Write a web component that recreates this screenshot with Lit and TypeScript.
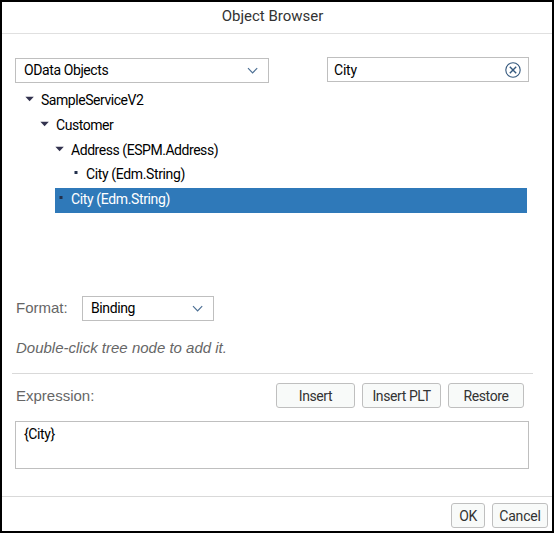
import { LitElement, html, css, svg } from "lit";
import { customElement, property } from "lit/decorators.js";

interface TreeNode {
  label: string;
  level: number;
  leaf?: boolean;
  selected?: boolean;
}

const NODES: TreeNode[] = [
  { label: "SampleServiceV2", level: 0 },
  { label: "Customer", level: 1 },
  { label: "Address (ESPM.Address)", level: 2 },
  { label: "City (Edm.String)", level: 3, leaf: true },
  { label: "City (Edm.String)", level: 2, leaf: true, selected: true },
];

const chevron = svg`<path d="M1 1.2 L5.6 5.8 L10.2 1.2" fill="none" stroke="#4c6f94" stroke-width="1.2"/>`;

@customElement("ob-select")
class ObSelect extends LitElement {
  @property() value = "";
  static styles = css`
    :host {
      display: flex;
      box-sizing: border-box;
      height: 25px;
      align-items: center;
      justify-content: space-between;
      border: 1px solid #bfbfbf;
      padding: 0 10px 1px 8px;
      background: #fff;
    }
    svg { display: block; width: 11px; height: 7px; }
  `;
  render() {
    return html`<span>${this.value}</span><svg viewBox="0 0 11 7">${chevron}</svg>`;
  }
}

@customElement("app-root")
class AppRoot extends LitElement {
  static styles = css`
    :host {
      display: flex;
      flex-direction: column;
      box-sizing: border-box;
      width: 554px;
      height: 533px;
      border: 2px solid #000;
      background: #fff;
      color: #000;
      font: 14px/16px Roboto, "Liberation Sans", sans-serif;
      letter-spacing: -0.4px;
      overflow: hidden;
      white-space: nowrap;
    }
    header {
      box-sizing: border-box;
      height: 32px;
      border-bottom: 1px solid #e0e0e0;
      text-align: center;
      font-size: 15px;
      letter-spacing: 0;
      line-height: 28px;
      color: #333;
      padding-right: 9px;
    }
    main { flex: 1; padding: 23px 23px 0 13px; }
    .filters { display: flex; justify-content: space-between; align-items: flex-start; }
    .source { width: 254px; margin-top: 1px; }
    .search {
      box-sizing: border-box;
      display: flex;
      align-items: center;
      justify-content: space-between;
      width: 202px;
      height: 25px;
      border: 1px solid #bfbfbf;
      padding: 0 7px 0 6px;
      letter-spacing: -0.2px;
    }
    .search svg { width: 16px; height: 16px; }
    .tree {
      box-sizing: border-box;
      height: 213px;
      padding: 6.6px 2px 0 0;
      letter-spacing: -0.45px;
    }
    .node {
      box-sizing: border-box;
      display: flex;
      align-items: center;
      height: 24.6px;
      padding-bottom: 3px;
    }
    .node.selected { background: #2f79b9; color: #fff; }
    .node.leaf { letter-spacing: -0.37px; }
    .mark { display: block; width: 16px; height: 12px; margin-top: -2px; }
    .format { display: flex; align-items: center; height: 25px; }
    .label, .hint {
      font-family: "Liberation Sans", Arial, sans-serif;
      font-size: 15px;
      letter-spacing: 0;
      color: #666;
    }
    .format .label { width: 67px; padding-bottom: 1px; }
    .format ob-select { width: 132px; }
    .hint { font-style: italic; margin-top: 19px; height: 33px; padding-left: 1px; }
    .label { padding-left: 1px; box-sizing: border-box; }
    .actions {
      display: flex;
      align-items: center;
      border-top: 1px solid #d9d9d9;
      margin: 0 -4px 0 -3px;
      padding: 9px 9px 0 3px;
    }
    .actions .label { flex: 1; }
    .btn {
      box-sizing: border-box;
      height: 25px;
      border: 1px solid #bfbfbf;
      border-radius: 3px;
      background: #f8faf9;
      color: #333;
      text-align: center;
      line-height: 24px;
    }
    .actions .btn { width: 79px; margin-left: 7px; }
    .actions .btn.restore { width: 76px; }
    .expr {
      box-sizing: border-box;
      height: 48px;
      margin-top: 13px;
      border: 1px solid #bfbfbf;
      padding: 4px 8px;
    }
    footer {
      box-sizing: border-box;
      height: 35px;
      display: flex;
      justify-content: flex-end;
      gap: 7px;
      padding: 6px 4px 0 0;
      border-top: 1px solid #d9d9d9;
    }
    .ok { width: 34px; }
    .cancel { width: 56px; letter-spacing: -0.2px; }
  `;

  private node(n: TreeNode) {
    const indent = 10 + n.level * 15;
    return html`<div
      class="node ${n.leaf ? "leaf" : ""} ${n.selected ? "selected" : ""}"
      style="margin-left:${indent}px">
      <svg class="mark" viewBox="0 0 16 12">
        ${n.leaf
          ? svg`<rect x="4.5" y="4" width="3" height="3" fill="#22304d"/>`
          : svg`<path d="M0.4 3.7 H8.8 L4.6 8.3 Z" fill="#32324e"/>`}
      </svg>
      <span>${n.label}</span>
    </div>`;
  }

  render() {
    return html`
      <header>Object Browser</header>
      <main>
        <div class="filters">
          <ob-select class="source" value="OData Objects"></ob-select>
          <div class="search">
            <span>City</span>
            <svg viewBox="0 0 16 16" fill="none" stroke="#34587d">
              <circle cx="8" cy="8" r="7.2" stroke-width="1.1"/>
              <path d="M4.8 4.8 L11.2 11.2 M11.2 4.8 L4.8 11.2" stroke-width="1.4"/>
            </svg>
          </div>
        </div>
        <div class="tree">${NODES.map((n) => this.node(n))}</div>
        <div class="format">
          <span class="label">Format:</span>
          <ob-select value="Binding"></ob-select>
        </div>
        <div class="hint">Double-click tree node to add it.</div>
        <div class="actions">
          <span class="label">Expression:</span>
          <div class="btn">Insert</div>
          <div class="btn">Insert PLT</div>
          <div class="btn restore">Restore</div>
        </div>
        <div class="expr">{City}</div>
      </main>
      <footer>
        <div class="btn ok">OK</div>
        <div class="btn cancel">Cancel</div>
      </footer>
    `;
  }
}
